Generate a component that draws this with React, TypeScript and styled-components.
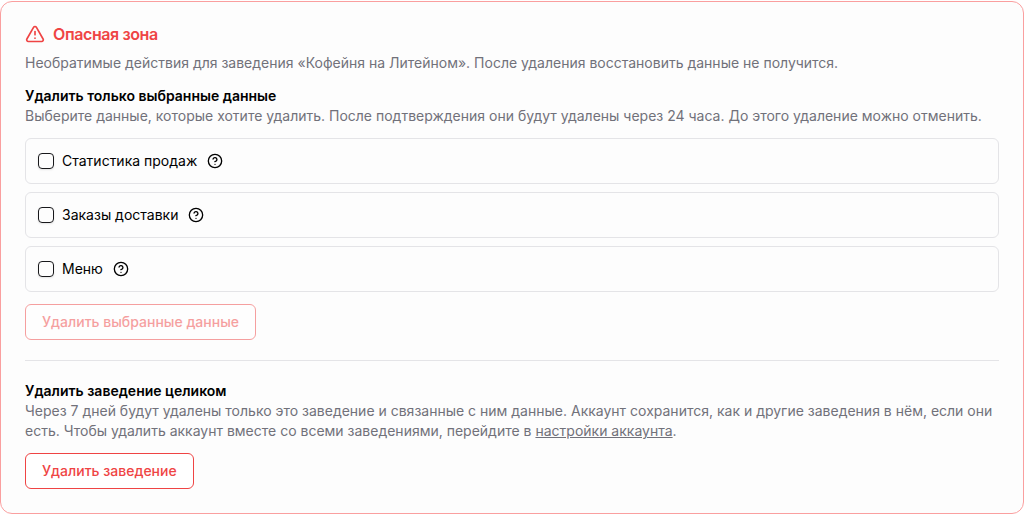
import React from "react";
import styled, { createGlobalStyle } from "styled-components";
import { TriangleAlert, CircleHelp } from "lucide-react";

const GlobalStyle = createGlobalStyle`
  *, *::before, *::after { box-sizing: border-box; }
  body {
    margin: 0;
    padding: 1px 0;
    background: #ffffff;
    color: #000000;
    font-family: Inter, "Liberation Sans", sans-serif;
    font-size: 14px;
    line-height: 20px;
  }
  h2, h3, p, ul { margin: 0; padding: 0; }
`;

const Card = styled.section`
  border: 1px solid #fa9f9f;
  border-radius: 12px;
  padding: 24px;
  background: #fdfdfd;
`;

const Title = styled.h2`
  display: flex;
  align-items: center;
  gap: 8px;
  height: 16px;
  margin-bottom: 11px;
  color: #ef4444;
  font-size: 16px;
  line-height: 16px;
  font-weight: 600;
  letter-spacing: -0.025em;
`;

const Text = styled.p`
  color: #71717a;
`;

const Block = styled.section`
  margin-top: 13px;
`;

const Subtitle = styled.h3`
  font-size: 14px;
  line-height: 20px;
  font-weight: 600;
`;

const Options = styled.ul`
  display: flex;
  flex-direction: column;
  gap: 8px;
  margin-top: 12px;
  list-style: none;
`;

const Option = styled.li`
  display: flex;
  align-items: center;
  gap: 10px;
  padding: 12px;
  border: 1px solid #e4e4e7;
  border-radius: 6px;
`;

const OptionLabel = styled.label`
  display: flex;
  align-items: center;
  gap: 8px;
`;

const Checkbox = styled.input`
  appearance: none;
  width: 16px;
  height: 16px;
  margin: 0;
  border: 1px solid #18181b;
  border-radius: 4px;
  box-shadow: 0 1px 2px rgba(0, 0, 0, 0.1);
  &:checked { background: #18181b; }
`;

const HelpButton = styled.button`
  display: flex;
  padding: 0;
  border: 0;
  background: none;
  color: inherit;
`;

const DangerButton = styled.button`
  height: 36px;
  padding: 0 16px;
  border: 1px solid #ef4444;
  border-radius: 6px;
  background: #ffffff;
  color: #ef4444;
  font: inherit;
  font-weight: 500;
  &:disabled { opacity: 0.5; }
`;

const Actions = styled.div`
  display: flex;
  margin-top: 12px;
`;

const Divider = styled.hr`
  height: 1px;
  margin: 20px 0;
  border: 0;
  background: #e4e4e7;
`;

const Link = styled.a`
  color: inherit;
  text-decoration: underline;
`;

const data = ["Статистика продаж", "Заказы доставки", "Меню"];

export default function App() {
  return (
    <>
      <GlobalStyle />
      <Card>
        <Title>
          <TriangleAlert size={20} strokeWidth={2} aria-hidden />
          Опасная зона
        </Title>
        <Text>
          Необратимые действия для заведения «Кофейня на Литейном». После удаления восстановить данные не получится.
        </Text>
        <Block>
          <Subtitle>Удалить только выбранные данные</Subtitle>
          <Text>
            Выберите данные, которые хотите удалить. После подтверждения они будут удалены через 24 часа. До этого
            удаление можно отменить.
          </Text>
          <Options>
            {data.map((name) => (
              <Option key={name}>
                <OptionLabel>
                  <Checkbox type="checkbox" />
                  {name}
                </OptionLabel>
                <HelpButton type="button" aria-label={name}>
                  <CircleHelp size={16} aria-hidden />
                </HelpButton>
              </Option>
            ))}
          </Options>
          <Actions>
            <DangerButton type="button" disabled>
              Удалить выбранные данные
            </DangerButton>
          </Actions>
        </Block>
        <Divider />
        <Block>
          <Subtitle>Удалить заведение целиком</Subtitle>
          <Text>
            Через 7 дней будут удалены только это заведение и связанные с ним данные. Аккаунт сохранится, как и другие
            заведения в нём, если они есть. Чтобы удалить аккаунт вместе со всеми заведениями, перейдите в{" "}
            <Link href="#account">настройки аккаунта</Link>.
          </Text>
          <Actions>
            <DangerButton type="button">Удалить заведение</DangerButton>
          </Actions>
        </Block>
      </Card>
    </>
  );
}
